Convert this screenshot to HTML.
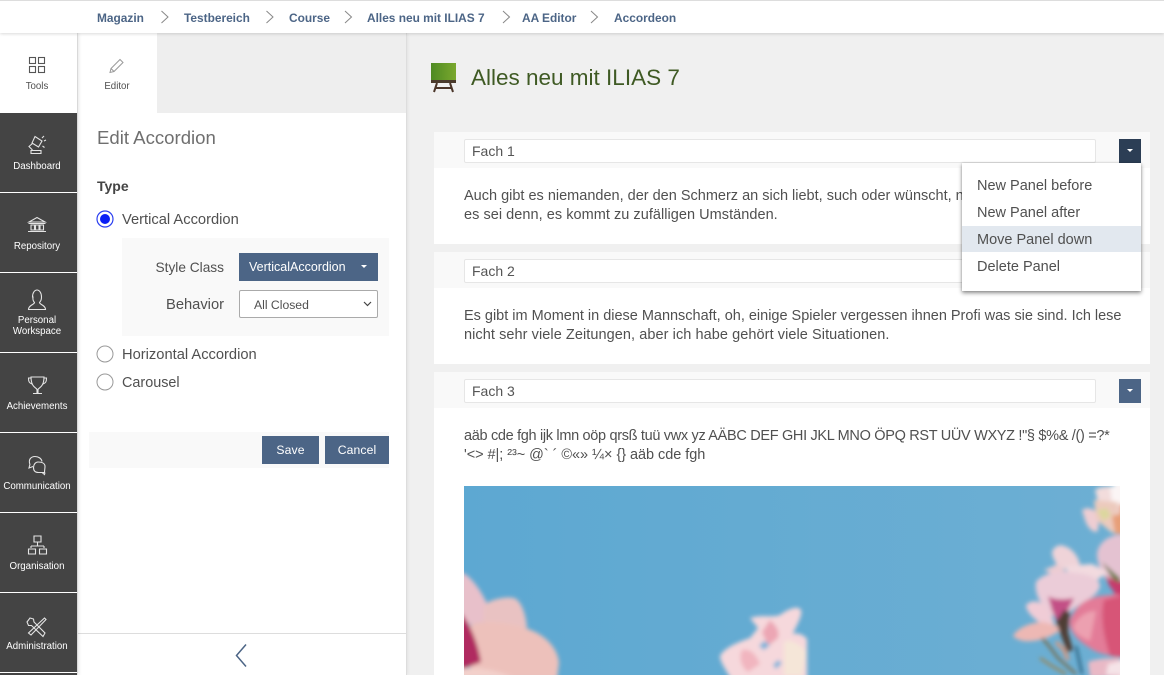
<!DOCTYPE html>
<html lang="en"><head><meta charset="utf-8"><title>Edit Accordion</title>
<style>
*{box-sizing:border-box}
html,body{margin:0;padding:0;width:1164px;height:675px;overflow:hidden}
body{font-family:"Liberation Sans",sans-serif;color:#555}
#page{position:relative;width:1164px;height:675px;overflow:hidden;background:#f0f0f0}
.b{position:absolute}
.t{position:absolute;white-space:nowrap;line-height:20px;font-size:14.5px;color:#505050}
.crumb{font-weight:bold;font-size:11.900px;color:#4c6586;top:8px}
.nav{position:absolute;left:0;width:77px;height:79px;background:#444}
.lab{position:absolute;left:0;width:74px;text-align:center;font-size:9.7px;line-height:11px;color:#fff}
.btn{position:absolute;background:#4c6586;color:#fff;font-size:12.2px;text-align:center;line-height:28px;letter-spacing:.1px}
.inp{position:absolute;left:464px;width:632px;height:24px;background:#fff;border:1px solid #e6e6e6;border-radius:2px;padding-left:7px;font-size:14px;line-height:22px;color:#555}
.hd{position:absolute;left:434px;width:716px;height:36px;background:#f9f9f9}
.bd{position:absolute;left:434px;width:716px;background:#fff}
.car{position:absolute;width:0;height:0;border-left:3.5px solid transparent;border-right:3.5px solid transparent;border-top:3.5px solid #fff}
svg{position:absolute;overflow:visible}
.ic{fill:none;stroke:#e4e4e4;stroke-width:1.1}
</style></head><body><div id="page">

<div class="b" style="left:0;top:0;width:1164px;height:33px;background:#fff;border-top:1px solid #ddd;box-shadow:0 1px 3px rgba(0,0,0,.15);z-index:3"></div>
<div style="position:absolute;left:0;top:0;z-index:4">
<span class="t crumb" style="left:97px">Magazin</span>
<span class="t crumb" style="left:184px">Testbereich</span>
<span class="t crumb" style="left:289px">Course</span>
<span class="t crumb" style="left:367px">Alles neu mit ILIAS 7</span>
<span class="t crumb" style="left:522px">AA Editor</span>
<span class="t crumb" style="left:614px">Accordeon</span>
<svg width="1164" height="34" style="left:0;top:0"><path d="M161.500 11l6.500 6-6.500 6M266.500 11l6.500 6-6.500 6M345 11l6.500 6-6.500 6M503 11l6.500 6-6.500 6M591 11l6.500 6-6.500 6" fill="none" stroke="#888" stroke-width="1"/></svg>
</div>

<!-- Sidebar -->
<div class="b" style="left:0;top:33px;width:77px;height:642px;background:#fff;box-shadow:1px 0 4px rgba(0,0,0,.15);z-index:2"></div>
<div style="position:absolute;left:0;top:0;z-index:2">
<div class="nav" style="top:113px"></div><div class="nav" style="top:193px"></div><div class="nav" style="top:273px"></div><div class="nav" style="top:353px"></div><div class="nav" style="top:433px"></div><div class="nav" style="top:513px"></div><div class="nav" style="top:593px"></div><div class="nav" style="top:673px;height:2px"></div>
<svg width="77" height="675" style="left:0;top:0">
<g fill="none" stroke="#555" stroke-width="1.1"><rect x="29.500" y="57.500" width="6" height="6"/><rect x="38.500" y="57.500" width="6" height="6"/><rect x="29.500" y="66.500" width="6" height="6"/><rect x="38.500" y="66.500" width="6" height="6"/></g>
<g class="ic">
<path d="M35 136.500l7 4.500-3.500 6-6.500-4zM33 143l-4 3.500 3.500 3.500M31 150.500h10v3H31zM44 141l2-1M42.500 146l2 1.500M42 138l2-2"/>
<path d="M29 222l8-4.500 8 4.500zM28 231.500h18M28.500 223.500h17M31 225h3.500v5H31zM35.500 225h3.500v5h-3.500zM40 225h3.500v5H40z"/>
<path d="M32.500 297c0-4 2-7 4.500-7s4.500 3 4.500 7c0 3-1.500 5-2 5.500 0 2 5.500 2.500 6 6.500v.5h-17V309c.5-4 6-4.500 6-6.500-.5-.5-2-2.500-1.500-5.500z"/>
<path d="M31 377h13c0 4-.5 8-4 10.500-1 .7-1.500 1-2 2v3.500h-1v-3.500c-.5-1-1-1.300-2-2-3.500-2.500-4-6.500-4-10.500zM31 378h-2.500c0 4 1 5 3.500 6M44 378h2.500c0 4-1 5-3.500 6M33 393.500h9"/>
<path d="M30 464.500c-2-5 1-8 5-8 3.500 0 6.500 2 7 5M30 464l-1 4 4-1.500"/><path d="M38 462c4 0 7 1.500 7 4.500 0 2-.500 3.500-.5 6h-6c-3.500 0-5-2-5-5s2-5.500 4.500-5.500zM42 472.500l2.500 2 .5-2"/>
<path d="M34 536h7v6h-7zM37.500 542v4M31 546h13M31 546v2M44 546v2M28.500 549h7v5h-7zM39.500 549h7v5h-7z"/>
<path d="M30 618l3.500 1 .5 3 11 11-2 3.500-11.500-11-3 0-1.500-3.500zM44.500 618l1.500 1.500-15 15.500-2.500-2z"/>
</g>
</svg>
<div class="lab" style="top:81px;color:#505050">Tools</div>
<div class="lab" style="top:161px">Dashboard</div>
<div class="lab" style="top:241px">Repository</div>
<div class="lab" style="top:315px">Personal<br>Workspace</div>
<div class="lab" style="top:401px">Achievements</div>
<div class="lab" style="top:481px">Communication</div>
<div class="lab" style="top:561px">Organisation</div>
<div class="lab" style="top:641px">Administration</div>
</div>

<!-- Slate -->
<div class="b" style="left:78px;top:33px;width:329px;height:642px;background:#fff;border-right:1px solid #ddd;box-shadow:1px 0 3px rgba(0,0,0,.06)"></div>
<div class="b" style="left:157px;top:33px;width:249px;height:80px;background:#eee"></div>
<svg width="20" height="20" style="left:108px;top:56px"><path d="M2 16.500l1-4L12 3.500l3 3-9 9zM3 12.500l3 3" fill="none" stroke="#999" stroke-width="1"/></svg>
<div class="lab" style="left:78px;width:78px;top:81px;color:#505050">Editor</div>
<span class="t" style="left:97px;top:128px;font-size:18.600px;color:#6f6f6f">Edit Accordion</span>
<span class="t" style="left:97px;top:176px;font-size:14px;font-weight:bold;color:#444">Type</span>
<svg width="30" height="190" style="left:90px;top:205px"><circle cx="15" cy="14" r="8" fill="#fff" stroke="#2a3ef0" stroke-width="1.200"/><circle cx="15" cy="14" r="5" fill="#0a1ef5"/><circle cx="15" cy="149" r="8" fill="#fff" stroke="#999"/><circle cx="15" cy="177" r="8" fill="#fff" stroke="#999"/></svg>
<span class="t" style="left:122px;top:210px;font-size:14.700px">Vertical Accordion</span>
<div class="b" style="left:122px;top:238px;width:267px;height:98px;background:#f9f9f9"></div>
<span class="t" style="right:940px;top:258px;font-size:13.700px">Style Class</span>
<div class="b" style="left:239px;top:253px;width:139px;height:28px;background:#4c6586"></div>
<span class="t" style="left:249px;top:257px;font-size:12.500px;color:#fff">VerticalAccordion</span>
<div class="car" style="left:361px;top:265px"></div>
<span class="t" style="right:940px;top:295px;font-size:14.700px">Behavior</span>
<div class="b" style="left:239px;top:290px;width:139px;height:28px;background:#fff;border:1px solid #aaa;border-radius:2px"></div>
<span class="t" style="left:254px;top:295px;font-size:12.200px">All Closed</span>
<svg width="10" height="6" style="left:363px;top:301px"><path d="M1 1l3.500 3.500L8 1" fill="none" stroke="#444" stroke-width="1.200"/></svg>
<span class="t" style="left:122px;top:345px;font-size:14.700px">Horizontal Accordion</span>
<span class="t" style="left:122px;top:373px;font-size:14.400px">Carousel</span>
<div class="b" style="left:89px;top:432px;width:300px;height:36px;background:#f9f9f9"></div>
<div class="btn" style="left:262px;top:436px;width:57px;height:28px">Save</div>
<div class="btn" style="left:325px;top:436px;width:64px;height:28px">Cancel</div>
<div class="b" style="left:78px;top:633px;width:328px;height:1px;background:#ddd"></div>
<svg width="16" height="26" style="left:233px;top:643px"><path d="M13 1.500L3.500 12.500 13 23.500" fill="none" stroke="#4c6586" stroke-width="1.500"/></svg>

<!-- Main -->
<svg width="26" height="30" style="left:431px;top:63px">
<defs><linearGradient id="g" x1="0" x2="1"><stop offset="0" stop-color="#4e8a22"/><stop offset="1" stop-color="#7aa82e"/></linearGradient></defs>
<rect x="0" y="0" width="25" height="17" fill="url(#g)"/><rect x="0" y="17" width="25" height="3" fill="#4a3a2c"/>
<path d="M6 20l-3 9M19 20l3 9M5 25h15" stroke="#4a3529" stroke-width="2" fill="none"/></svg>
<span class="t" style="left:471px;top:68px;font-size:22.500px;color:#3f5a24">Alles neu mit ILIAS 7</span>

<div class="hd" style="top:132px"></div><div class="bd" style="top:168px;height:76px"></div>
<div class="hd" style="top:252px"></div><div class="bd" style="top:288px;height:76px"></div>
<div class="hd" style="top:372px"></div><div class="bd" style="top:408px;height:267px"></div>
<div class="inp" style="top:139px">Fach 1</div>
<div class="inp" style="top:259px">Fach 2</div>
<div class="inp" style="top:379px">Fach 3</div>
<div class="b" style="left:1119px;top:139px;width:22px;height:24px;background:#2c3e55"></div><div class="car" style="left:1127px;top:149px"></div>
<div class="b" style="left:1119px;top:379px;width:22px;height:24px;background:#4c6586"></div><div class="car" style="left:1127px;top:389px"></div>

<span class="t" style="left:464px;top:186px">Auch gibt es niemanden, der den Schmerz an sich liebt, such oder wünscht, nur, weil er Schmerz ist,</span>
<span class="t" style="left:464px;top:205px;letter-spacing:.04px">es sei denn, es kommt zu zufälligen Umständen.</span>
<span class="t" style="left:464px;top:306px;letter-spacing:-.01px">Es gibt im Moment in diese Mannschaft, oh, einige Spieler vergessen ihnen Profi was sie sind. Ich lese</span>
<span class="t" style="left:464px;top:325px;letter-spacing:.07px">nicht sehr viele Zeitungen, aber ich habe gehört viele Situationen.</span>
<span class="t" style="left:464px;top:426px;letter-spacing:-.32px">aäb cde fgh ijk lmn oöp qrsß tuü vwx yz AÄBC DEF GHI JKL MNO ÖPQ RST UÜV WXYZ !"§ $%&amp; /() =?*</span>
<span class="t" style="left:464px;top:445px;letter-spacing:-.05px">'&lt;&gt; #|; ²³~ @` ´ ©«» ¼× {} aäb cde fgh</span>

<svg width="656" height="189" viewBox="464 486 656 189" style="left:464px;top:486px;overflow:hidden">
<defs>
<linearGradient id="sky" x1="0" x2="1"><stop offset="0" stop-color="#5da8d2"/><stop offset="1" stop-color="#6dafd3"/></linearGradient>
<filter id="bl" x="-20%" y="-20%" width="140%" height="140%"><feGaussianBlur stdDeviation="2"/></filter>
</defs>
<rect x="464" y="486" width="656" height="189" fill="url(#sky)"/>
<g filter="url(#bl)">
<!-- left flower -->
<path d="M460 572c10 2 22 20 27 32l-3 18-24 4z" fill="#e8c0ca"/>
<path d="M484 606c2-5 20-10 30-8 8 3 12 18 13 30l-44 8z" fill="#e9c2c2"/>
<path d="M470 625c14-6 40-2 58 4 18 6 30 20 31 34l-2 16h-87z" fill="#edc1bb"/>
<path d="M460 612c8 8 18 30 21 50l-21 8z" fill="#b02a60"/>
<path d="M460 669c14-3 36 0 56 10h-56z" fill="#f3d0cb"/>
<!-- middle blossom -->
<path d="M720 656c4-8 18-14 30-18l8-10-8-10c12-4 22 0 30-3 8-6 18-10 21-5 2 6-6 18-8 24 6-2 12 2 14 5v46H732c2-6-12-20-12-29z" fill="#f6d8dc"/>
<path d="M770 620c6 6 10 10 8 18l-10 8-6-14z" fill="#eca6b4"/>
<path d="M742 650c8-2 14 4 18 14l-12 8c-6-4-10-14-6-22z" fill="#f1b5bf"/>
<path d="M784 642c8-4 18 4 22 10l-4 24h-18z" fill="#f5e6d8"/>
<path d="M764 641l6 4-6 5-5-4zM778 660l4 3-6 6-3-4z" fill="#79b3da"/>
<!-- right edge fill, keeps colours solid past the crop -->
<rect x="1114" y="480" width="20" height="24" fill="#fbf5f5"/>
<rect x="1116" y="504" width="18" height="30" fill="#e79f78"/>
<rect x="1114" y="535" width="20" height="46" fill="#e4c2d1"/>
<rect x="1114" y="581" width="20" height="14" fill="#c73a6c"/>
<rect x="1114" y="595" width="20" height="62" fill="#d75477"/>
<rect x="1112" y="660" width="22" height="22" fill="#f5e4e8"/>
<!-- right cluster: top -->
<path d="M1095 490c4-3 10-4 25-4v32l-20-8z" fill="#f2dcdc"/>
<path d="M1110 486h10v20l-8-3z" fill="#fbf5f5"/>
<path d="M1082 510c5-3 10-2 14 2 4 6 3 16 1 20-6 0-10-6-12-12z" fill="#eecdd2"/>
<path d="M1094 500l24 2 2 30-8 1c-6-6-14-10-16-16z" fill="#eccabd"/>
<path d="M1097 510l10-2 4 8-8 5z" fill="#dcd79e"/>
<path d="M1112 516l8-2v18l-5 2z" fill="#e79f78"/>
<!-- upper right -->
<path d="M1097 555c0-10 10-20 23-20v58c-8-4-22-20-23-38z" fill="#e4c2d1"/>
<path d="M1102 562l18 16v5l-6-2z" fill="#6f7c4a"/>
<path d="M1106 576l14 7v12c-8-3-12-10-14-19z" fill="#c73a6c"/>
<!-- centre flower -->
<path d="M1052 552c2-6 8-8 12-6 8 2 14 10 16 18-6 6-16 6-22 4-2-6-6-10-6-16z" fill="#efd3d8"/>
<path d="M1044 570l14-6 8 8-6 6z" fill="#ecccd1"/>
<path d="M1066 566l26-2 16 8-16 12-24-4z" fill="#f2dadf"/>
<path d="M1036 582c6-8 22-12 34-10 14 2 30 4 30 14-2 10-14 14-22 20l-12 8-14 2c-10-8-18-22-16-34z" fill="#ebccd8"/>
<path d="M1048 596c6 4 16 4 26 2l-8 16-8 10-6-14z" fill="#c34f86"/>
<path d="M1026 605c6-6 14-4 20 2 4 6 8 12 8 18l-14-2c-8-6-14-12-14-18z" fill="#f0ccd6"/>
<path d="M1013 636c4-8 18-14 30-14l22 6-14 8c-14 6-30 8-38 0z" fill="#edb8b4"/>
<path d="M1056 622l8-12 6 2-2 20 5 18-6 2-5-14z" fill="#503c34"/>
<!-- big pink petal -->
<path d="M1070 620c6-16 18-22 30-24l20-2v62c-10 0-22-2-30-8-10-6-22-16-20-28z" fill="#e37c98"/>
<path d="M1104 600l16-4v60l-10 0c-6-18-10-40-6-56z" fill="#d75477"/>
<path d="M1074 625c6-10 14-14 22-14l-6 30c-8-4-18-8-16-16z" fill="#eca0b0"/>
<path d="M1088 662c10-4 22-4 32-4v20h-30z" fill="#e9b9c6"/>
<path d="M1108 664l12-3v14h-14z" fill="#f5e4e8"/>
<!-- stems -->
<path d="M1042 638c6 6 10 12 16 20l18 16" fill="none" stroke="#7a6a4a" stroke-width="2.500"/>
<path d="M1040 658l12 8 14 8" fill="none" stroke="#9a8558" stroke-width="2.500"/>
<path d="M1056 642l8 8 4 10" fill="none" stroke="#cf9a86" stroke-width="4"/>
<path d="M1076 646l6 28" fill="none" stroke="#1f4d6a" stroke-width="2"/>
</g>
</svg>

<!-- Dropdown -->
<div class="b" style="left:962px;top:163px;width:179px;height:128px;background:#fff;box-shadow:0 2px 4px rgba(0,0,0,.45),0 0 2px rgba(0,0,0,.15)"></div>
<div class="b" style="left:962px;top:226px;width:179px;height:26px;background:#e2e8ef"></div>
<span class="t" style="left:977px;top:176px">New Panel before</span>
<span class="t" style="left:977px;top:203px">New Panel after</span>
<span class="t" style="left:977px;top:230px">Move Panel down</span>
<span class="t" style="left:977px;top:257px">Delete Panel</span>
</div></body></html>
